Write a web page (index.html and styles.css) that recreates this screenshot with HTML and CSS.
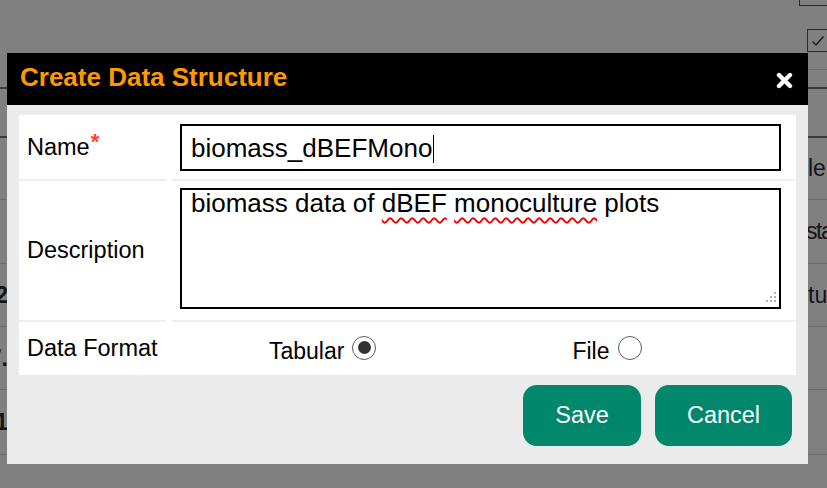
FILE: index.html
```html
<!DOCTYPE html>
<html>
<head>
<meta charset="utf-8">
<link rel="stylesheet" href="styles.css">
</head>
<body>
<div class="page">
  <div class="page-top">
    <div class="chk-col">
      <span class="chk chk-a"></span>
      <span class="chk chk-b">
        <svg width="14" height="12" viewBox="0 0 14 12"><path d="M1.5 6.5 L5 10 L12.5 1.5" fill="none" stroke="#1c1c1c" stroke-width="1.4"/></svg>
      </span>
      <span class="top-line"></span>
    </div>
  </div>
  <div class="prow dark h49"><div class="lc"></div><div class="mc"></div><div class="rc"></div></div>
  <div class="prow h61"><div class="lc"></div><div class="mc"></div><div class="rc">le</div></div>
  <div class="prow h63"><div class="lc"></div><div class="mc"></div><div class="rc rc-tight">sta</div></div>
  <div class="prow h62"><div class="lc">2</div><div class="mc"></div><div class="rc">tu</div></div>
  <div class="prow h62"><div class="lc">7.</div><div class="mc"></div><div class="rc"></div></div>
  <div class="prow h64"><div class="lc">1</div><div class="mc"></div><div class="rc"></div></div>
</div>

<div class="dialog">
  <div class="dlg-head">
    <span class="dlg-title">Create Data Structure</span>
    <svg class="dlg-close" width="17" height="17" viewBox="0 0 17 17"><path d="M3 3 L14 14 M14 3 L3 14" stroke="#fff" stroke-width="4.4" stroke-linecap="round"/></svg>
  </div>
  <div class="dlg-body">
    <div class="form">
      <div class="lbl sep">Name<span class="req">*</span></div>
      <div class="val sep val-name">
        <div class="field field-name">biomass_dBEFMono<span class="caret"></span></div>
      </div>
      <div class="lbl sep">Description</div>
      <div class="val sep val-desc">
        <div class="field field-desc">biomass data of <span class="spell">dBEF</span> <span class="spell">monoculture</span> plots
          <svg class="grip" width="14" height="14" viewBox="0 0 14 14">
            <rect x="11" y="1" width="2" height="2" fill="#b0b0b0"/>
            <rect x="7" y="5" width="2" height="2" fill="#b0b0b0"/>
            <rect x="11" y="5" width="2" height="2" fill="#b0b0b0"/>
            <rect x="3" y="9" width="2" height="2" fill="#b0b0b0"/>
            <rect x="7" y="9" width="2" height="2" fill="#b0b0b0"/>
            <rect x="11" y="9" width="2" height="2" fill="#b0b0b0"/>
          </svg>
        </div>
      </div>
      <div class="lbl">Data Format</div>
      <div class="val val-fmt">
        <label class="opt">Tabular <span class="radio checked"></span></label>
        <label class="opt opt-file">File <span class="radio"></span></label>
      </div>
    </div>
    <div class="actions">
      <button class="btn btn-save">Save</button>
      <button class="btn btn-cancel">Cancel</button>
    </div>
  </div>
</div>
</body>
</html>
```
FILE: styles.css
```css
html, body {
  margin: 0;
  padding: 0;
  width: 827px;
  height: 488px;
  overflow: hidden;
  background: #808080;
  font-family: "Liberation Sans", Arial, sans-serif;
}

.page {
  display: flex;
  flex-direction: column;
  color: #151515;
  font-size: 23px;
}

.page-top {
  height: 87px;
  display: flex;
  justify-content: flex-end;
}

.chk-col {
  width: 28px;
  position: relative;
}

.chk {
  position: absolute;
  border: 1px solid #2a2a2a;
  box-sizing: border-box;
}

.chk-a {
  left: 0;
  top: -20px;
  width: 30px;
  height: 26px;
}

.chk-b {
  left: 8px;
  top: 29px;
  width: 24px;
  height: 23px;
  display: flex;
  align-items: center;
  padding-left: 3px;
}

.top-line {
  position: absolute;
  left: 8px;
  right: 0;
  top: 69px;
  height: 1px;
  background: #6d6d6d;
}

.prow {
  display: grid;
  grid-template-columns: 8px 1fr 20px;
  border-top: 1px solid #6c6c6c;
}

.prow.dark {
  border-top: 2px solid #3c3c3c;
}

.prow.h49 { height: 47px; border-bottom: 2px solid #3c3c3c; }
.prow.h49 + .prow { border-top: none; }
.h61 { height: 61px; }
.h62 { height: 62px; }
.h63 { height: 63px; }
.h64 { height: 64px; border-bottom: 1px solid #6c6c6c; }

.lc {
  display: flex;
  justify-content: flex-end;
  align-items: center;
  white-space: nowrap;
  font-weight: bold;
  color: #151515;
}

.rc {
  display: flex;
  align-items: center;
  white-space: nowrap;
  padding-left: 1px;
}

.rc-tight {
  letter-spacing: -1.5px;
  margin-left: -2px;
}

/* dialog */
.dialog {
  position: absolute;
  left: 7px;
  top: 53px;
  width: 801px;
  background: #ebebeb;
}

.dlg-head {
  height: 52px;
  background: #000;
  display: flex;
  align-items: center;
  justify-content: space-between;
  padding: 0 15px 0 13px;
}

.dlg-title {
  color: #ff9900;
  font-weight: bold;
  font-size: 26px;
  margin-top: -3px;
}

.dlg-close {
  display: block;
  margin-top: 2px;
}

.dlg-body {
  padding: 10px 12px 18px 12px;
}

.form {
  background: #fff;
  display: grid;
  grid-template-columns: 147px 624px;
  column-gap: 6px;
}

.sep {
  border-bottom: 2px solid #eeeeee;
}

.lbl {
  display: flex;
  align-items: center;
  padding-left: 8px;
  font-size: 23.5px;
  color: #000;
}

.req {
  color: #ff4418;
  font-weight: bold;
  font-size: 22px;
  align-self: flex-start;
  margin-top: 14px;
  margin-left: 1px;
}

.val {
  padding-left: 8px;
  padding-right: 15px;
}

.val-name {
  padding-top: 9px;
  box-sizing: border-box;
  height: 66px;
}

.field {
  border: 2px solid #000;
  box-sizing: border-box;
  background: #fff;
  font-size: 26px;
  color: #000;
  white-space: nowrap;
}

.field-name {
  height: 47px;
  display: flex;
  align-items: center;
  padding-left: 9px;
  padding-top: 2px;
}

.caret {
  display: inline-block;
  width: 1px;
  height: 28px;
  background: #000;
  margin-left: 1px;
}

.val-desc {
  padding-top: 7px;
  height: 141px;
  box-sizing: border-box;
}

.field-desc {
  height: 121px;
  position: relative;
  padding: 0 9px;
  line-height: 27px;
}

.spell {
  text-decoration: underline wavy #f00000;
  text-decoration-thickness: 1.6px;
  text-underline-offset: 5px;
}

.grip {
  position: absolute;
  right: 2px;
  bottom: 2px;
}

.val-fmt {
  height: 53px;
  display: flex;
  align-items: center;
  padding-left: 97px;
}

.opt {
  display: flex;
  align-items: center;
  font-size: 23px;
  color: #000;
  padding-top: 6px;
}

.opt-file {
  margin-left: 196px;
}

.radio {
  width: 24px;
  height: 24px;
  box-sizing: border-box;
  border: 1.5px solid #5a5a5a;
  border-radius: 50%;
  background: #fff;
  margin-left: 8px;
  margin-top: -8px;
  display: flex;
  align-items: center;
  justify-content: center;
}

.radio.checked::after {
  content: "";
  width: 13px;
  height: 13px;
  border-radius: 50%;
  background: #333;
}

.actions {
  display: flex;
  justify-content: flex-end;
  gap: 14px;
  margin-top: 10px;
  padding-right: 4px;
}

.btn {
  height: 61px;
  border: none;
  border-radius: 14px;
  background: #00876c;
  color: #fff;
  font-family: "Liberation Sans", Arial, sans-serif;
  font-size: 23.5px;
  padding: 0;
}

.btn-save { width: 118px; }
.btn-cancel { width: 137px; }
```
